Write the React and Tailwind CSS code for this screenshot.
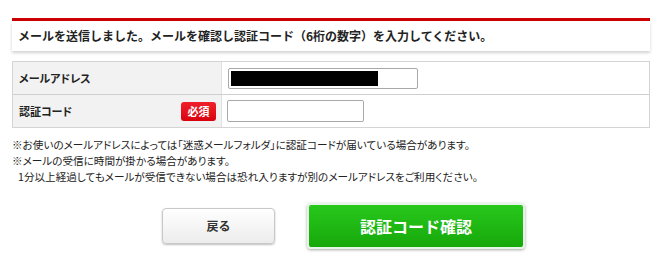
export default function App() {
  const jp = { fontFamily: '"Noto Sans CJK JP", "Noto Sans", sans-serif' };
  return (
    <div className="w-[662px] h-[269px] bg-white overflow-hidden" style={jp}>
      <div className="px-3 pt-[18px]">
        <div className="h-[3px] bg-[#cc0000]" />
        <div className="h-[30px] bg-white flex items-center pl-[6px] shadow-[0_2px_3px_rgba(0,0,0,0.18)] text-[12px] font-bold text-[#222]">
          メールを送信しました。メールを確認し認証コード（6桁の数字）を入力してください。
        </div>
        <div className="mt-[10px] border border-[#d4d4d4] text-[11px] font-bold text-[#222] [font-feature-settings:'palt']">
          <div className="flex h-[33px] border-b border-[#cfcfcf]">
            <div className="w-[209px] bg-[#f2f2f2] flex items-center pl-[6px] border-r border-[#e0e0e0]">メールアドレス</div>
            <div className="flex items-center pl-[6px]">
              <div className="w-[190px] h-[21px] border border-[#a9a9a9] rounded-[2px] bg-white p-[2px] flex">
                <div className="w-[147px] h-full bg-black" />
              </div>
            </div>
          </div>
          <div className="flex h-[32px]">
            <div className="w-[209px] bg-[#f2f2f2] flex items-center justify-between pl-[6px] pr-[5px] border-r border-[#e0e0e0]">
              <span>認証コード</span>
              <span className="w-[35px] h-[19px] rounded-[3px] bg-gradient-to-b from-[#f0202a] to-[#d8000c] text-white text-[11px] flex items-center justify-center">必須</span>
            </div>
            <div className="flex items-center pl-[5px]">
              <div className="w-[137px] h-[22px] border border-[#a9a9a9] rounded-[2px] bg-white" />
            </div>
          </div>
        </div>
        <div className="mt-[9px] text-[10.6px] leading-[16px] text-[#222] [font-feature-settings:'palt']">
          <div>※お使いのメールアドレスによっては「迷惑メールフォルダ」に認証コードが届いている場合があります。</div>
          <div>※メールの受信に時間が掛かる場合があります。</div>
          <div className="pl-[6px]">1分以上経過してもメールが受信できない場合は恐れ入りますが別のメールアドレスをご利用ください。</div>
        </div>
        <div className="mt-[18px] flex items-center pl-[150px] gap-[32px]">
          <button className="w-[113px] h-[36px] rounded-[4px] border border-[#c8c8c8] bg-gradient-to-b from-white to-[#ececec] shadow-[0_1px_2px_rgba(0,0,0,0.25)] text-[12px] font-bold text-[#333]">
            戻る
          </button>
          <button className="w-[218px] h-[46px] rounded-[4px] border-2 border-[#e6f6e6] bg-gradient-to-b from-[#28c81c] to-[#16a80a] shadow-[0_1px_3px_rgba(0,0,0,0.35)] text-[16px] font-bold text-white">
            認証コード確認
          </button>
        </div>
      </div>
    </div>
  );
}
